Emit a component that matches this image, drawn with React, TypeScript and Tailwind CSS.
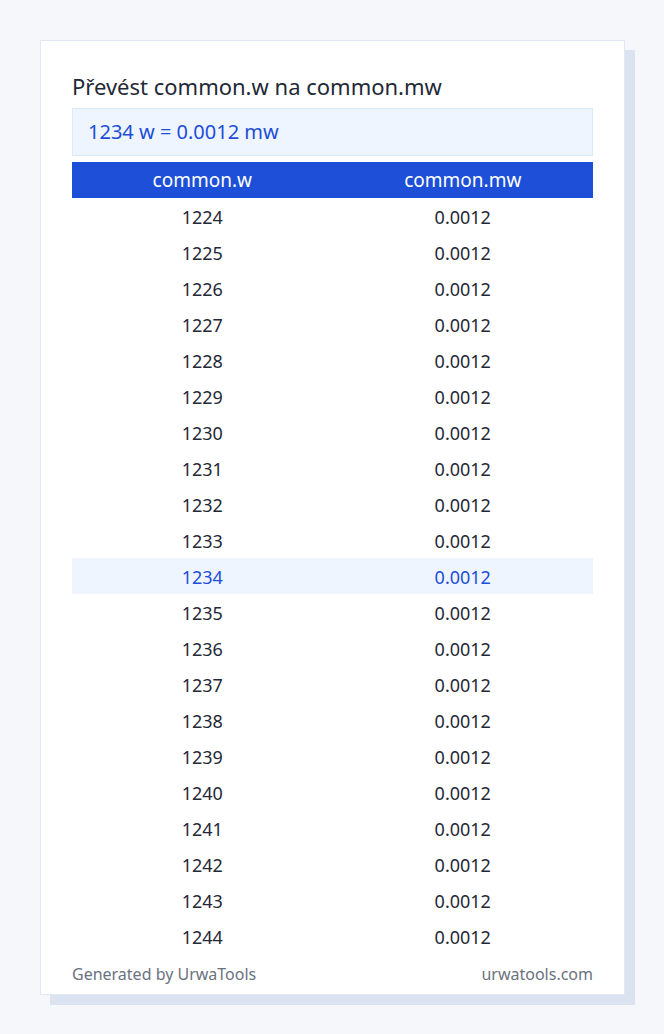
import React from "react";

const rows = Array.from({ length: 21 }, (_, i) => 1224 + i);

export default function App() {
  return (
    <div className="min-h-[1034px] w-[664px] bg-[#f5f7fb] pt-[40px] pl-[40px]" style={{ fontFamily: '"Noto Sans", "Open Sans", sans-serif' }}>
      <div className="relative w-[585px]">
        <div className="absolute left-[10px] top-[10px] h-full w-full bg-[#dce3f0]" />
        <div className="relative flex flex-col border border-[#e1e8f5] bg-white px-[31px] pt-[31px] pb-[10px]">
          <h1 className="text-[22px] leading-[28px] text-[#1f2937]">Převést common.w na common.mw</h1>
          <div className="mt-[8px] flex h-[48px] items-center border border-[#dbeafe] bg-[#eef5ff] px-[15px] text-[20px] text-[#1d4ed8]">
            1234 w = 0.0012 mw
          </div>
          <div className="mt-[6px] grid h-[36px] grid-cols-2 items-center bg-[#1d4fd8] text-center text-[19px] text-white">
            <div>common.w</div>
            <div>common.mw</div>
          </div>
          {rows.map((r) => (
            <div
              key={r}
              className={`grid h-[36px] grid-cols-2 items-center pt-[2px] text-center text-[18px] leading-[34px] ${
                r === 1234 ? "bg-[#eef5ff] text-[#1d4ed8]" : "text-[#1f2937]"
              }`}
            >
              <div>{r}</div>
              <div>0.0012</div>
            </div>
          ))}
          <div className="mt-[10px] flex h-[20px] items-center justify-between text-[16px] text-[#6b7280]">
            <span>Generated by UrwaTools</span>
            <span>urwatools.com</span>
          </div>
        </div>
      </div>
    </div>
  );
}
